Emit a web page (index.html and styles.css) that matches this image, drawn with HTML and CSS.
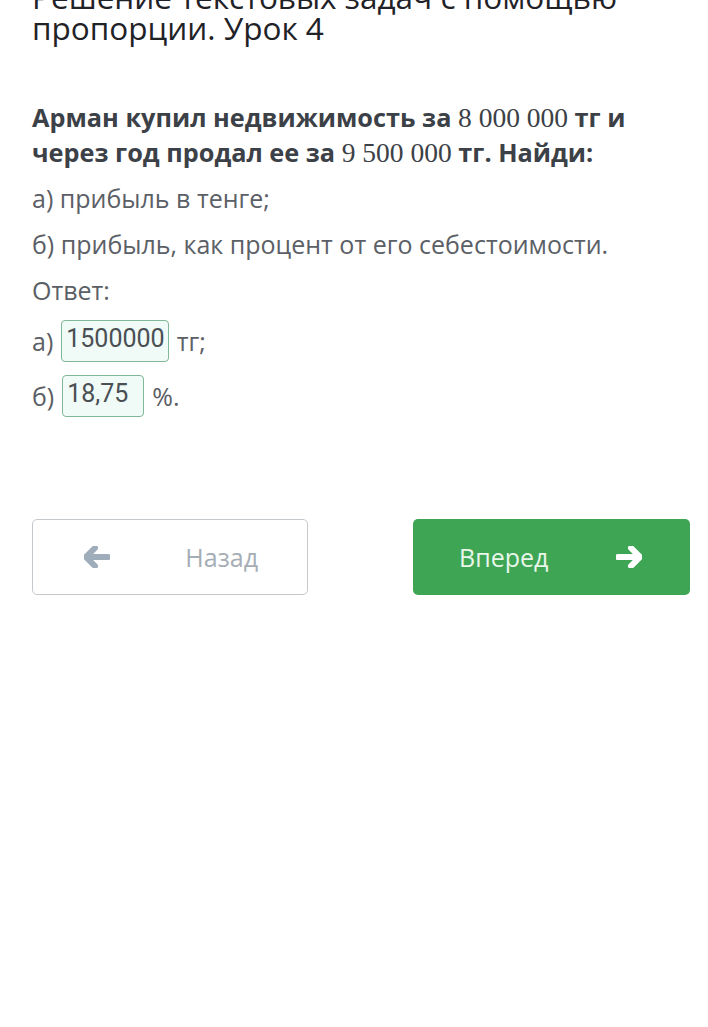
FILE: index.html
```html
<!DOCTYPE html>
<html lang="ru">
<head>
<meta charset="utf-8">
<title>Урок 4</title>
<link rel="stylesheet" href="styles.css">
</head>
<body>
<main class="page">
  <h1 class="title">Решение текстовых задач с помощью пропорции. Урок 4</h1>
  <p class="question">Арман купил недвижимость за <span class="num">8 000 000</span> тг и через год продал ее за <span class="num">9 500 000</span> тг. Найди:</p>
  <p class="line">а) прибыль в тенге;</p>
  <p class="line">б) прибыль, как процент от его себестоимости.</p>
  <p class="line">Ответ:</p>
  <div class="answer answer-a"><span>а)</span><span class="field field-a">1500000</span><span>тг;</span></div>
  <div class="answer answer-b"><span>б)</span><span class="field field-b">18,75</span><span>%.</span></div>
  <div class="nav">
    <button class="btn btn-back" type="button">
      <svg class="ico" width="26" height="22" viewBox="0 0 26 22"><path d="M11 2 L2 11 L11 20 M3 11 H24" fill="none" stroke="#9fadba" stroke-width="6" stroke-linecap="round" stroke-linejoin="round"/></svg>
      <span>Назад</span>
    </button>
    <button class="btn btn-next" type="button">
      <span>Вперед</span>
      <svg class="ico" width="26" height="22" viewBox="0 0 26 22"><path d="M15 2 L24 11 L15 20 M2 11 H23" fill="none" stroke="#ffffff" stroke-width="6" stroke-linecap="round" stroke-linejoin="round"/></svg>
    </button>
  </div>
</main>
</body>
</html>
```

FILE: styles.css
```css
* { box-sizing: border-box; }
html, body { margin: 0; padding: 0; background: #ffffff; }
body { font-family: "Open Sans", "Noto Sans", sans-serif; color: #5b6066; }
.page { padding: 0 18px 0 32px; }
.title {
  margin: -19px 0 0;
  font-weight: 400;
  font-size: 31.5px;
  line-height: 31px;
  color: #1f2226;
  width: 620px;
}
.question {
  margin: 57px 0 0;
  font-size: 25.3px;
  line-height: 34px;
  font-weight: 700;
  color: #3c4147;
  width: 650px;
}
.num {
  font-family: "Liberation Serif", "DejaVu Serif", serif;
  font-weight: 400;
  font-size: 27.5px;
  color: #3c4147;
}
.line {
  margin: 11px 0 0;
  font-size: 25px;
  line-height: 35px;
  color: #5b6066;
}
.answer {
  display: flex;
  align-items: center;
  gap: 8px;
  font-size: 25px;
  line-height: 35px;
  color: #5b6066;
}
.answer-a { margin-top: 12px; }
.answer-b { margin-top: 13px; }
.field {
  display: inline-block;
  font-family: Roboto, "Noto Sans", sans-serif;
  font-size: 25px;
  line-height: 30px;
  color: #4a4f54;
  background: #f0faf6;
  border: 1px solid #7fb79a;
  border-radius: 4px;
  padding: 3px 3px 7px 4px;
  height: 42px;
}
.field-b { width: 82px; }
.nav {
  display: grid;
  grid-template-columns: 276px 277px;
  justify-content: space-between;
  margin-top: 102px;
}
.btn {
  height: 76px;
  border-radius: 5px;
  font-family: "Open Sans", "Noto Sans", sans-serif;
  font-size: 25px;
  display: flex;
  align-items: center;
  cursor: pointer;
}
.btn-back {
  background: #ffffff;
  border: 1px solid #c4c9ce;
  color: #a5adb5;
  padding: 0 49px 0 51px;
  justify-content: space-between;
}
.btn-next {
  background: #3ea555;
  border: none;
  color: #e9f6ea;
  padding: 0 48px 0 46px;
  justify-content: space-between;
}
.ico { display: block; }
```
